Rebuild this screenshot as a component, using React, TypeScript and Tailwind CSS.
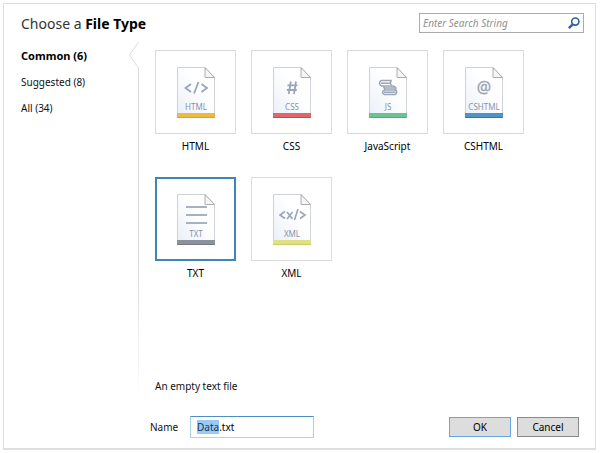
import { useEffect, useRef, useState } from "react";
import type { ReactNode } from "react";

type FileType = { name: string; tag: string; color: string; edge: string; glyph: ReactNode };

const ink = "#9aa5b8";

const types: FileType[] = [
  {
    name: "HTML",
    tag: "HTML",
    color: "#f0b83c",
    edge: "#d9a02c",
    glyph: (
      <path d="M14 17L8.5 21L14 25M24.5 17L30 21L24.5 25M21.5 15L17 26.5" fill="none" stroke={ink} strokeWidth="1.8" />
    ),
  },
  {
    name: "CSS",
    tag: "CSS",
    color: "#e4646c",
    edge: "#cf4650",
    glyph: (
      <path d="M17.8 14.5L15.8 27M23 14.5L21 27M14.5 18.3H24.5M13.8 23H23.8" fill="none" stroke={ink} strokeWidth="1.8" />
    ),
  },
  {
    name: "JavaScript",
    tag: "JS",
    color: "#66c592",
    edge: "#48ad78",
    glyph: (
      <g fill="none" stroke={ink} strokeWidth="1.5" strokeLinejoin="round">
        <path d="M22.5 13.5H12.5C9.8 14.5 9.8 18 12.5 19H24C27 19.5 27.5 21.5 26.5 23" />
        <path d="M22.5 13.5C21 15 21.5 17.5 23 19M12 16.2H21.5M14.5 19L16 23H26.5C28.3 24 28.3 26.5 26 27.5H15.5C13 26.5 13 24 15.5 23M15.5 21H26M15 25.3H26.5" />
      </g>
    ),
  },
  {
    name: "CSHTML",
    tag: "CSHTML",
    color: "#4d94c8",
    edge: "#3078ad",
    glyph: (
      <text x="19" y="26" textAnchor="middle" fontSize="16" stroke={ink} strokeWidth="0.4" fill={ink}>
        @
      </text>
    ),
  },
  {
    name: "TXT",
    tag: "TXT",
    color: "#8b929d",
    edge: "#747b87",
    glyph: <path d="M9 13H30M9 21H30M9 29H30" stroke="#a9b1c1" strokeWidth="2" />,
  },
  {
    name: "XML",
    tag: "XML",
    color: "#dfe083",
    edge: "#c9cb66",
    glyph: (
      <path
        d="M12 17.5L7 21L12 24.5M27 17.5L32 21L27 24.5M25 15L21.5 26M14 18L19.5 25M19.5 18L14 25"
        fill="none"
        stroke={ink}
        strokeWidth="1.6"
      />
    ),
  },
];

function FileIcon({ type }: { type: FileType }) {
  const id = `paper-${type.name}`;
  return (
    <svg width="38" height="51" viewBox="0 0 38 51" aria-hidden="true">
      <defs>
        <linearGradient id={id} x1="1" y1="0" x2="0" y2="1">
          <stop offset="0.4" stopColor="#ffffff" />
          <stop offset="1" stopColor="#e9eff9" />
        </linearGradient>
      </defs>
      <path d="M0.5 50.5V0.5H28L37.5 10.5V50.5Z" fill={`url(#${id})`} stroke="#cfd2d8" />
      <path d="M28 0.5V10.5H37.5Z" fill="#f5f5f5" stroke="#a9acb1" />
      <rect y="46" width="38" height="5" fill={type.color} />
      <rect y="50" width="38" height="1" fill={type.edge} />
      {type.glyph}
      <text x="19" y="43" textAnchor="middle" fontSize="8" fill="#8793aa">
        {type.tag}
      </text>
    </svg>
  );
}

const groups = ["Common (6)", "Suggested (8)", "All (34)"];

export default function App() {
  const [selected, setSelected] = useState("TXT");
  const [group, setGroup] = useState(groups[0]);
  const nameRef = useRef<HTMLInputElement>(null);

  useEffect(() => {
    nameRef.current?.focus();
    nameRef.current?.setSelectionRange(0, 4);
  }, []);

  return (
    <div className="flex min-h-screen bg-white py-[3px] pr-1 pl-[3px] font-['Noto_Sans','Open_Sans',sans-serif] text-[10px] leading-4 text-[#111]">
      <main className="flex flex-1 flex-col border border-b-2 border-[#dedede]">
        <header className="flex items-start justify-between pt-2 pr-[11px] pl-[17px]">
          <h1 className="text-[14px] leading-6 text-[#333]">
            Choose a <b className="font-bold text-black">File Type</b>
          </h1>
          <form role="search" className="mt-px flex h-5 w-[165px] items-center border border-[#ababab] px-[3px]">
            <input
              type="search"
              aria-label="Search file types"
              placeholder="Enter Search String"
              className="min-w-0 flex-1 leading-4 italic outline-none placeholder:text-[#909090]"
            />
            <button type="button" aria-label="Search">
              <svg width="12" height="12" viewBox="0 0 11 11" fill="none" stroke="#2c62a6" aria-hidden="true">
                <circle cx="6.7" cy="4.2" r="3.3" strokeWidth="1.5" />
                <path d="M4.3 6.7L0.8 10.2" strokeWidth="2.2" />
              </svg>
            </button>
          </form>
        </header>

        <div className="flex flex-1">
          <nav className="flex w-[125px] flex-col items-start gap-[10px] pt-3 pl-[17px] text-[11px]">
            {groups.map((g) => (
              <button
                key={g}
                type="button"
                onClick={() => setGroup(g)}
                className={g === group ? "text-[11px] font-bold text-black" : "text-[10px]"}
              >
                {g}
              </button>
            ))}
          </nav>
          <div className="mt-[6px] flex w-[10px] flex-col items-end">
            <svg width="10" height="26" viewBox="0 0 10 26" fill="none" stroke="#dadada" aria-hidden="true">
              <path d="M9.5 0L0.5 13L9.5 26" />
            </svg>
            <div className="w-px flex-1 bg-linear-to-b from-[#dadada] from-60% to-white" />
          </div>
          <section className="flex flex-1 flex-col pt-[14px] pl-4">
            <ul className="grid grid-cols-[repeat(auto-fill,81px)] gap-x-[15px] gap-y-[23px]">
              {types.map((t) => (
                <li key={t.name}>
                  <button
                    type="button"
                    aria-pressed={t.name === selected}
                    onClick={() => setSelected(t.name)}
                    className="flex w-full flex-col items-center gap-[4px] text-black"
                  >
                    <span
                      className={
                        t.name === selected
                          ? "flex h-[84px] w-full items-center justify-center border-2 border-[#3f86b8]"
                          : "flex h-[84px] w-full items-center justify-center border border-[#dcdcdc]"
                      }
                    >
                      <FileIcon type={t} />
                    </span>
                    <span>{t.name}</span>
                  </button>
                </li>
              ))}
            </ul>
            <p className="mt-auto pb-[6px]">An empty text file</p>
          </section>
        </div>

        <footer className="flex items-center justify-between pt-4 pr-4 pb-[10px] pl-[146px]">
          <div className="flex items-center">
            <label htmlFor="name" className="w-10">
              Name
            </label>
            <input
              id="name"
              ref={nameRef}
              defaultValue="Data.txt"
              className="h-[22px] w-[124px] border border-[#a9d3ea] border-t-[#4d8fc4] px-[6px] text-black outline-none selection:bg-[#99c9f5] selection:text-[#123a5c]"
            />
          </div>
          <div className="flex gap-[6px]">
            <button type="button" className="h-5 w-[62px] border border-[#66a7e8] bg-[#dddddd] text-black">
              OK
            </button>
            <button type="button" className="h-5 w-[62px] border border-[#8a8a8a] bg-[#dddddd] text-black">
              Cancel
            </button>
          </div>
        </footer>
      </main>
    </div>
  );
}
